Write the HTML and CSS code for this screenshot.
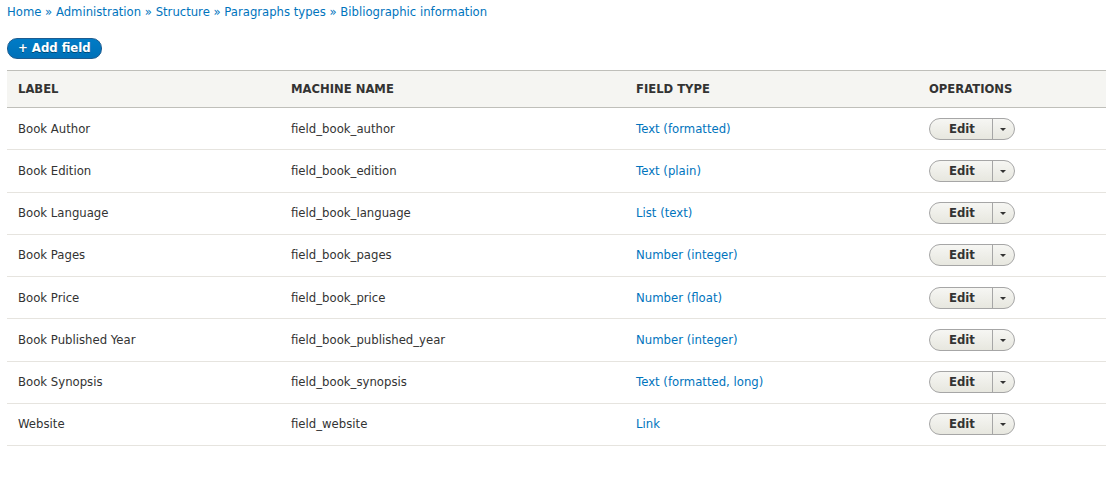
FILE: index.html
```html
<!DOCTYPE html>
<html>
<head>
<meta charset="utf-8">
<link rel="stylesheet" href="styles.css">
</head>
<body>
<div class="page">
  <nav class="breadcrumb">
    <a href="#">Home</a> » <a href="#">Administration</a> » <a href="#">Structure</a> » <a href="#">Paragraphs types</a> » <a href="#">Bibliographic information</a>
  </nav>
  <div class="actions"><a class="btn-primary" href="#">+ Add field</a></div>
  <table class="fields">
    <thead>
      <tr><th class="c1">Label</th><th class="c2">Machine name</th><th class="c3">Field type</th><th class="c4">Operations</th></tr>
    </thead>
    <tbody>
      <tr><td>Book Author</td><td>field_book_author</td><td><a href="#">Text (formatted)</a></td><td><span class="dropbutton"><span class="main">Edit</span><span class="toggle"><span class="arrow"></span></span></span></td></tr>
      <tr><td>Book Edition</td><td>field_book_edition</td><td><a href="#">Text (plain)</a></td><td><span class="dropbutton"><span class="main">Edit</span><span class="toggle"><span class="arrow"></span></span></span></td></tr>
      <tr><td>Book Language</td><td>field_book_language</td><td><a href="#">List (text)</a></td><td><span class="dropbutton"><span class="main">Edit</span><span class="toggle"><span class="arrow"></span></span></span></td></tr>
      <tr><td>Book Pages</td><td>field_book_pages</td><td><a href="#">Number (integer)</a></td><td><span class="dropbutton"><span class="main">Edit</span><span class="toggle"><span class="arrow"></span></span></span></td></tr>
      <tr><td>Book Price</td><td>field_book_price</td><td><a href="#">Number (float)</a></td><td><span class="dropbutton"><span class="main">Edit</span><span class="toggle"><span class="arrow"></span></span></span></td></tr>
      <tr><td>Book Published Year</td><td>field_book_published_year</td><td><a href="#">Number (integer)</a></td><td><span class="dropbutton"><span class="main">Edit</span><span class="toggle"><span class="arrow"></span></span></span></td></tr>
      <tr><td>Book Synopsis</td><td>field_book_synopsis</td><td><a href="#">Text (formatted, long)</a></td><td><span class="dropbutton"><span class="main">Edit</span><span class="toggle"><span class="arrow"></span></span></span></td></tr>
      <tr><td>Website</td><td>field_website</td><td><a href="#">Link</a></td><td><span class="dropbutton"><span class="main">Edit</span><span class="toggle"><span class="arrow"></span></span></span></td></tr>
    </tbody>
  </table>
</div>
</body>
</html>
```

FILE: styles.css
```css
html, body {
  margin: 0;
  padding: 0;
  background: #fff;
}
body {
  font-family: "DejaVu Sans", sans-serif;
  font-size: 11.7px;
  color: #333;
}
.page {
  padding: 4px 0 0 7px;
}
a {
  color: #0074bd;
  text-decoration: none;
}
.breadcrumb {
  color: #0074bd;
  font-size: 11.65px;
  line-height: 16px;
  height: 16px;
}
.actions {
  margin-top: 18px;
  height: 20px;
}
.btn-primary {
  display: inline-block;
  box-sizing: border-box;
  height: 21px;
  padding: 0 10px 0 10px;
  border-radius: 10px;
  background: linear-gradient(to bottom, #007bc6, #0071b8);
  border: 1px solid #1e5c90;
  color: #fff;
  font-weight: bold;
  font-size: 11.7px;
  line-height: 19px;
  text-shadow: 0 1px rgba(0,0,0,0.4);
}
table.fields {
  margin-top: 12px;
  width: 1099px;
  border-collapse: collapse;
}
thead th {
  background: #f5f5f2;
  border-top: 1px solid #bfbfba;
  border-bottom: 1px solid #bfbfba;
  text-align: left;
  text-transform: uppercase;
  font-size: 11.6px;
  font-weight: bold;
  color: #333;
  height: 37px;
  padding: 0 11px;
  box-sizing: border-box;
}
th.c1 { width: 273px; }
th.c2 { width: 345px; }
th.c3 { width: 293px; }
th.c4 { width: 188px; }
tbody td {
  height: 42.25px;
  padding: 0 11px;
  border-bottom: 1px solid #e6e4df;
  box-sizing: border-box;
  vertical-align: middle;
}
.dropbutton {
  display: inline-flex;
  box-sizing: border-box;
  height: 22px;
  border: 1px solid #a6a6a6;
  border-radius: 11px;
  background: linear-gradient(to bottom, #f6f6f3, #e7e7df);
  vertical-align: middle;
  overflow: hidden;
}
.dropbutton .main {
  width: 60px;
  text-align: center;
  font-weight: bold;
  font-size: 11.7px;
  line-height: 20px;
  color: #333;
  border-right: 1px solid #a6a6a6;
  padding-left: 2px;
}
.dropbutton .toggle {
  width: 21px;
  display: flex;
  align-items: center;
  justify-content: center;
}
.dropbutton .arrow {
  width: 0;
  height: 0;
  border-left: 3px solid transparent;
  border-right: 3px solid transparent;
  border-top: 3px solid #333;
  margin-right: 2px;
  margin-top: 1px;
}
```
